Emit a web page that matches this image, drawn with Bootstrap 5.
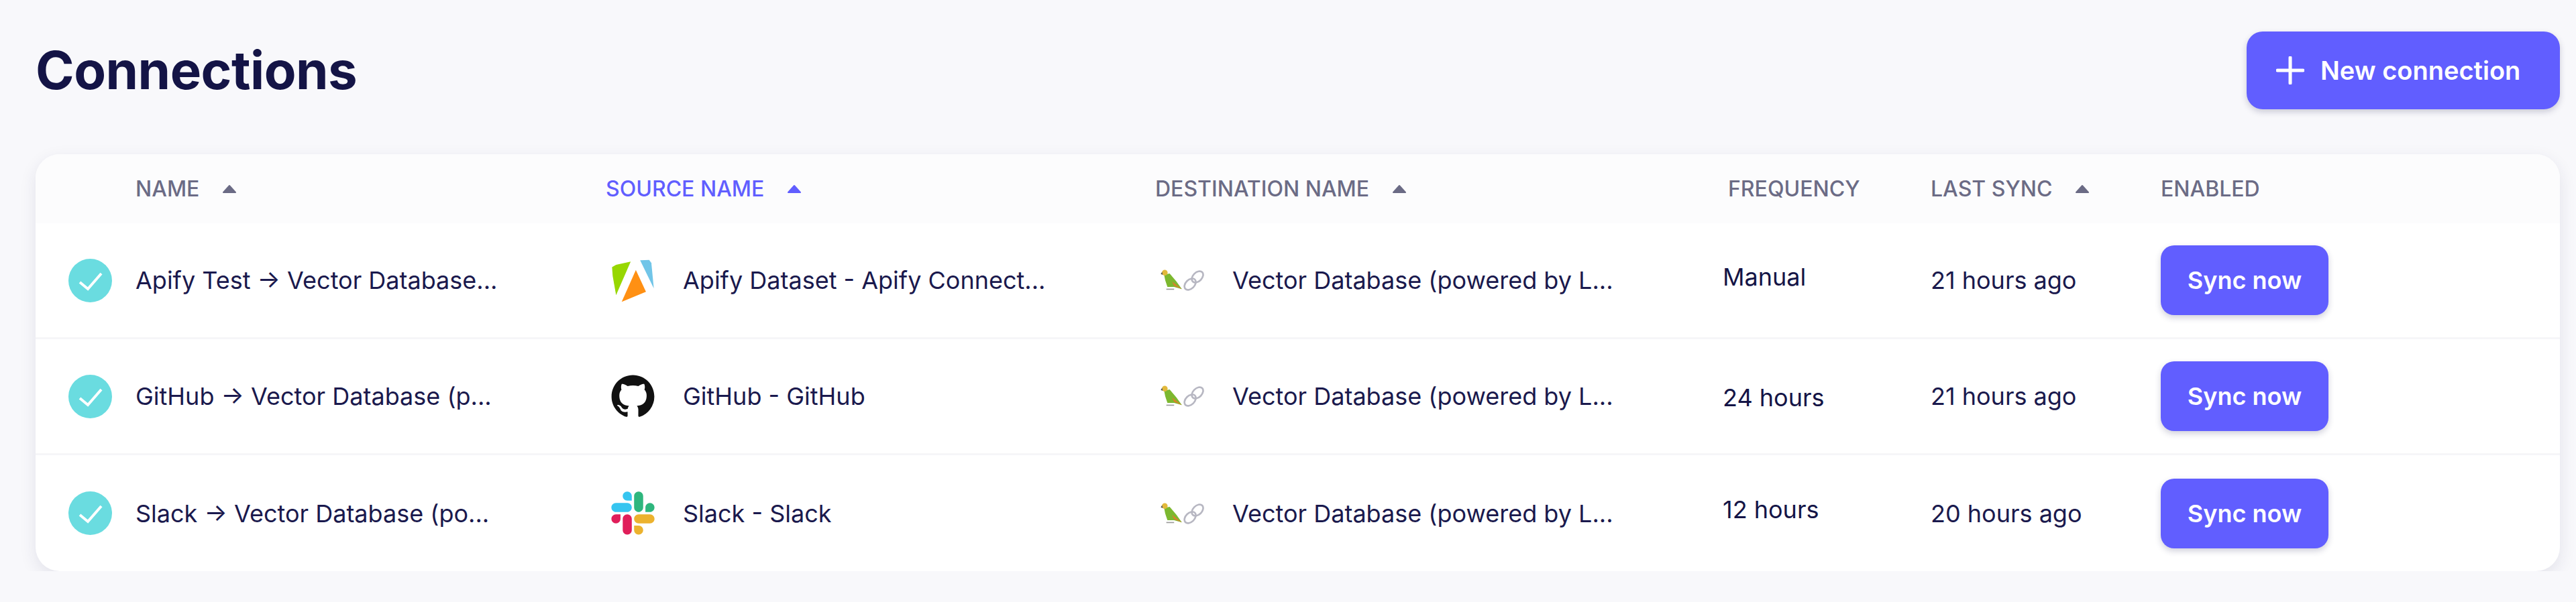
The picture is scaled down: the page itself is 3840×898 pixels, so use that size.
<!DOCTYPE html>
<html lang="en">
<head>
  <meta charset="UTF-8">
  <title>Connections</title>
  <meta name="viewport" content="width=device-width, initial-scale=1" />
  <link href="https://cdn.jsdelivr.net/npm/bootstrap@5.3.0/dist/css/bootstrap.min.css" rel="stylesheet">
  <style>
    body { background: #f8f8fb; font-family: Inter, "Liberation Sans", sans-serif; color: #1a194d; }
    .page-wrap { padding: 47px 24px 0 53px; }
    .page-title { font-size: 78px; font-weight: 700; color: #141446; margin: 0; letter-spacing: -0.5px; }
    .btn-violet { background: #615eff; border: 0; color: #fff; font-weight: 600; box-shadow: 0 4px 10px rgba(40, 40, 90, .22); }
    .btn-violet:hover { background: #5552f0; color: #fff; }
    .btn-new { width: 467px; height: 116px; border-radius: 24px; font-size: 38px; gap: 24px; padding-left: 44px; }
    .btn-sync { width: 250px; height: 104px; border-radius: 20px; font-size: 36px; padding: 0; }
    .conn-card { margin-top: 67px; background: #fff; border-radius: 36px; box-shadow: 0 8px 24px rgba(40, 40, 90, .1); overflow: hidden; }
    .conn-grid { display: grid; grid-template-columns: 149px 701px 819px 846px 310px 343px 1fr; }
    .conn-head { height: 103px; background: #fcfcfd; font-size: 32px; font-weight: 500; color: #6b6b85; text-transform: uppercase; }
    .conn-head .sort-on { color: #615eff; }
    .sort-mark { width: 22px; height: 14px; margin-left: 34px; fill: currentColor; stroke: currentColor; }
    .conn-row { height: 173px; border-bottom: 3px solid #f6f6f8; font-size: 36px; }
    .conn-row:last-child { border-bottom: 0; height: 173px; }
    .conn-row > div { min-width: 0; white-space: nowrap; }
    .src-logo { width: 67px; height: 67px; margin-left: 7px; margin-right: 41px; flex: none; }
    .dest-logo { width: 73px; height: 40px; margin-left: 5px; margin-right: 37px; flex: none; }
    .check-mark { width: 65px; height: 65px; margin-left: 49px; }
    /* frequency column sits a few px off the other columns */
    .freq-cell { color: #141446; }
    .freq-a { padding-bottom: 10px; margin-bottom: -3px; border-bottom: 3px solid #f6f6f8; }
    .freq-b { margin-bottom: -3px; border-bottom: 3px solid #f6f6f8; margin-top: 3px; }
    .freq-c { padding-bottom: 12px; }
  </style>
</head>
<body>
  <div class="page-wrap">
    <div class="d-flex justify-content-between align-items-center">
      <h1 class="page-title">Connections</h1>
      <button class="btn btn-violet btn-new d-flex align-items-center" type="button">
        <svg width="42" height="42" viewBox="0 0 42 42"><path d="M21 2v38M2 21h38" stroke="#fff" stroke-width="5" stroke-linecap="round"/></svg>
        New connection
      </button>
    </div>

    <div class="conn-card">
      <div class="conn-grid conn-head align-items-center">
        <div></div>
        <div class="d-flex align-items-center">Name <svg class="sort-mark" viewBox="0 0 22 14"><path d="M11 2 20 12H2z" stroke-width="2" stroke-linejoin="round"/></svg></div>
        <div class="d-flex align-items-center sort-on">Source name <svg class="sort-mark" viewBox="0 0 22 14"><path d="M11 2 20 12H2z" stroke-width="2" stroke-linejoin="round"/></svg></div>
        <div class="d-flex align-items-center">Destination name <svg class="sort-mark" viewBox="0 0 22 14"><path d="M11 2 20 12H2z" stroke-width="2" stroke-linejoin="round"/></svg></div>
        <div class="ps-2">Frequency</div>
        <div class="d-flex align-items-center">Last sync <svg class="sort-mark" viewBox="0 0 22 14"><path d="M11 2 20 12H2z" stroke-width="2" stroke-linejoin="round"/></svg></div>
        <div>Enabled</div>
      </div>

      <!-- Apify row -->
      <div class="conn-grid conn-row align-items-stretch">
        <div class="d-flex align-items-center">
          <svg class="check-mark" viewBox="0 0 65 65"><circle cx="32.5" cy="32.5" r="32.5" fill="#6adce0"/><path d="M17 35 29 45 49 22" fill="none" stroke="#fff" stroke-width="4"/></svg>
        </div>
        <div class="d-flex align-items-center">Apify Test → Vector Database...</div>
        <div class="d-flex align-items-center">
          <svg class="src-logo" viewBox="90 50 200 200">
            <path d="M97 90 115 80 180 66 115 215 100 130z" fill="#97d700"/>
            <path d="M203 103 248 200 140 245z" fill="#ff9013"/>
            <path d="M222 60 262 58 272 72 283 185z" fill="#71c5e8"/>
          </svg>
          Apify Dataset - Apify Connect...
        </div>
        <div class="d-flex align-items-center">
          <svg class="dest-logo" viewBox="80 60 220 120">
            <path d="M105 95 130 90 160 125 185 160 150 150 120 150 110 120z" fill="#7cb82f"/>
            <path d="M140 125 185 160 150 145z" fill="#d9822b"/>
            <circle cx="108" cy="86" r="13" fill="#e2b93b"/>
            <path d="M96 82 90 92 99 96z" fill="#555"/>
            <path d="M115 158h35v5h-35z" fill="#9a9a9a"/>
            <g fill="none" stroke="#b7b7c2" stroke-width="8">
              <ellipse cx="222" cy="138" rx="30" ry="20" transform="rotate(-45 222 138)"/>
              <ellipse cx="255" cy="105" rx="30" ry="20" transform="rotate(-45 255 105)"/>
            </g>
          </svg>
          Vector Database (powered by L...
        </div>
        <div class="d-flex align-items-center freq-cell freq-a">Manual</div>
        <div class="d-flex align-items-center">21 hours ago</div>
        <div class="d-flex align-items-center"><button class="btn btn-violet btn-sync" type="button">Sync now</button></div>
      </div>

      <!-- GitHub row -->
      <div class="conn-grid conn-row align-items-stretch">
        <div class="d-flex align-items-center">
          <svg class="check-mark" viewBox="0 0 65 65"><circle cx="32.5" cy="32.5" r="32.5" fill="#6adce0"/><path d="M17 35 29 45 49 22" fill="none" stroke="#fff" stroke-width="4"/></svg>
        </div>
        <div class="d-flex align-items-center">GitHub → Vector Database (p...</div>
        <div class="d-flex align-items-center">
          <svg class="src-logo" viewBox="-0.4 -0.4 16.8 16.8"><path fill="#111" d="M8 0C3.58 0 0 3.58 0 8c0 3.54 2.29 6.53 5.47 7.59.4.07.55-.17.55-.38 0-.19-.01-.82-.01-1.49-2.01.37-2.53-.49-2.69-.94-.09-.23-.48-.94-.82-1.13-.28-.15-.68-.52-.01-.53.63-.01 1.08.58 1.23.82.72 1.21 1.87.87 2.33.66.07-.52.28-.87.51-1.07-1.78-.2-3.64-.89-3.64-3.95 0-.87.31-1.59.82-2.15-.08-.2-.36-1.02.08-2.12 0 0 .67-.21 2.2.82.64-.18 1.32-.27 2-.27.68 0 1.36.09 2 .27 1.53-1.04 2.2-.82 2.2-.82.44 1.1.16 1.92.08 2.12.51.56.82 1.27.82 2.15 0 3.07-1.87 3.75-3.65 3.95.29.25.54.73.54 1.48 0 1.07-.01 1.93-.01 2.2 0 .21.15.46.55.38A8.013 8.013 0 0016 8c0-4.42-3.58-8-8-8z"/></svg>
          GitHub - GitHub
        </div>
        <div class="d-flex align-items-center">
          <svg class="dest-logo" viewBox="80 60 220 120">
            <path d="M105 95 130 90 160 125 185 160 150 150 120 150 110 120z" fill="#7cb82f"/>
            <path d="M140 125 185 160 150 145z" fill="#d9822b"/>
            <circle cx="108" cy="86" r="13" fill="#e2b93b"/>
            <path d="M96 82 90 92 99 96z" fill="#555"/>
            <path d="M115 158h35v5h-35z" fill="#9a9a9a"/>
            <g fill="none" stroke="#b7b7c2" stroke-width="8">
              <ellipse cx="222" cy="138" rx="30" ry="20" transform="rotate(-45 222 138)"/>
              <ellipse cx="255" cy="105" rx="30" ry="20" transform="rotate(-45 255 105)"/>
            </g>
          </svg>
          Vector Database (powered by L...
        </div>
        <div class="d-flex align-items-center freq-cell freq-b">24 hours</div>
        <div class="d-flex align-items-center">21 hours ago</div>
        <div class="d-flex align-items-center"><button class="btn btn-violet btn-sync" type="button">Sync now</button></div>
      </div>

      <!-- Slack row -->
      <div class="conn-grid conn-row align-items-stretch">
        <div class="d-flex align-items-center">
          <svg class="check-mark" viewBox="0 0 65 65"><circle cx="32.5" cy="32.5" r="32.5" fill="#6adce0"/><path d="M17 35 29 45 49 22" fill="none" stroke="#fff" stroke-width="4"/></svg>
        </div>
        <div class="d-flex align-items-center">Slack → Vector Database (po...</div>
        <div class="d-flex align-items-center">
          <svg class="src-logo" viewBox="-2 -2 131 131">
            <path fill="#E01E5A" d="M27.2 80c0 7.3-5.9 13.2-13.2 13.2C6.7 93.2.8 87.3.8 80c0-7.3 5.9-13.2 13.2-13.2h13.2V80zm6.6 0c0-7.3 5.9-13.2 13.2-13.2 7.3 0 13.2 5.9 13.2 13.2v33c0 7.3-5.9 13.2-13.2 13.2-7.3 0-13.2-5.9-13.2-13.2V80z"/>
            <path fill="#36C5F0" d="M47 27c-7.3 0-13.2-5.9-13.2-13.2C33.8 6.5 39.7.6 47 .6c7.3 0 13.2 5.9 13.2 13.2V27H47zm0 6.7c7.3 0 13.2 5.9 13.2 13.2 0 7.3-5.9 13.2-13.2 13.2H13.9C6.6 60.1.7 54.2.7 46.9c0-7.3 5.9-13.2 13.2-13.2H47z"/>
            <path fill="#2EB67D" d="M99.9 46.9c0-7.3 5.9-13.2 13.2-13.2 7.3 0 13.2 5.9 13.2 13.2 0 7.3-5.9 13.2-13.2 13.2H99.9V46.9zm-6.6 0c0 7.3-5.9 13.2-13.2 13.2-7.3 0-13.2-5.9-13.2-13.2V13.8C66.9 6.5 72.8.6 80.1.6c7.3 0 13.2 5.9 13.2 13.2v33.1z"/>
            <path fill="#ECB22E" d="M80.1 99.8c7.3 0 13.2 5.9 13.2 13.2 0 7.3-5.9 13.2-13.2 13.2-7.3 0-13.2-5.9-13.2-13.2V99.8h13.2zm0-6.6c-7.3 0-13.2-5.9-13.2-13.2 0-7.3 5.9-13.2 13.2-13.2h33.1c7.3 0 13.2 5.9 13.2 13.2 0 7.3-5.9 13.2-13.2 13.2H80.1z"/>
          </svg>
          Slack - Slack
        </div>
        <div class="d-flex align-items-center">
          <svg class="dest-logo" viewBox="80 60 220 120">
            <path d="M105 95 130 90 160 125 185 160 150 150 120 150 110 120z" fill="#7cb82f"/>
            <path d="M140 125 185 160 150 145z" fill="#d9822b"/>
            <circle cx="108" cy="86" r="13" fill="#e2b93b"/>
            <path d="M96 82 90 92 99 96z" fill="#555"/>
            <path d="M115 158h35v5h-35z" fill="#9a9a9a"/>
            <g fill="none" stroke="#b7b7c2" stroke-width="8">
              <ellipse cx="222" cy="138" rx="30" ry="20" transform="rotate(-45 222 138)"/>
              <ellipse cx="255" cy="105" rx="30" ry="20" transform="rotate(-45 255 105)"/>
            </g>
          </svg>
          Vector Database (powered by L...
        </div>
        <div class="d-flex align-items-center freq-cell freq-c">12 hours</div>
        <div class="d-flex align-items-center">20 hours ago</div>
        <div class="d-flex align-items-center"><button class="btn btn-violet btn-sync" type="button">Sync now</button></div>
      </div>
    </div>
  </div>

  <script src="https://cdn.jsdelivr.net/npm/bootstrap@5.3.0/dist/js/bootstrap.bundle.min.js"></script>
</body>
</html>
